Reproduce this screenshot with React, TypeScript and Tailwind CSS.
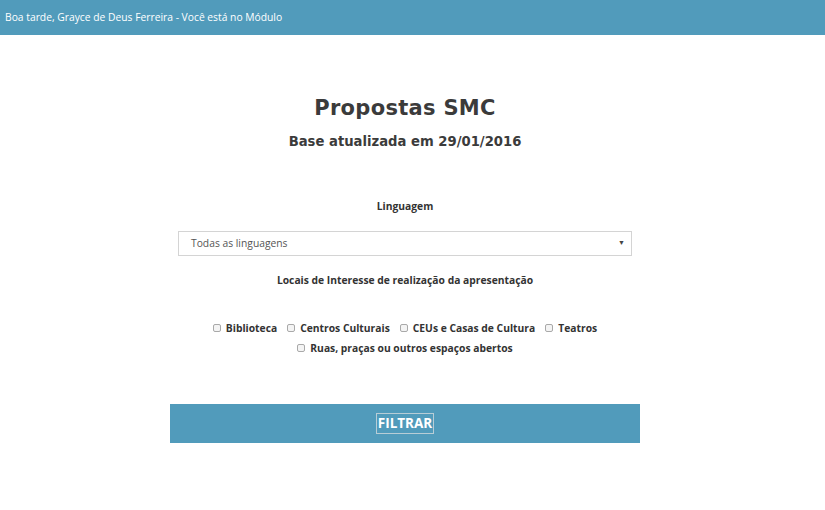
import React from 'react';

const locais = ['Biblioteca', 'Centros Culturais', 'CEUs e Casas de Cultura', 'Teatros'];

const Check = ({ label }: { label: string }) => (
  <label className="inline-flex items-center gap-[5px] mx-[5px]">
    <span className="w-[8px] h-[8px] rounded-[2px] border border-[#a9a9a9] bg-[#f4f4f4]" />
    <span>{label}</span>
  </label>
);

export default function App() {
  return (
    <div className="min-h-[510px] bg-white font-['Open_Sans',sans-serif] text-[#333]">
      <div className="h-[35px] bg-[#519bbb] px-[5px] flex items-center text-white text-[10.3px]">
        Boa tarde, Grayce de Deus Ferreira - Você está no Módulo
      </div>

      <div className="ml-[170px] w-[470px] text-center">
        <h1 className="mt-[58px] text-[21px] leading-[30px] font-bold text-[#3b3b3b] font-['DejaVu_Sans',sans-serif] tracking-[0.3px]">
          Propostas SMC
        </h1>
        <h2 className="mt-[9px] text-[13.2px] leading-[20px] font-bold text-[#3b3b3b] font-['DejaVu_Sans',sans-serif]">
          Base atualizada em 29/01/2016
        </h2>

        <p className="mt-[46px] text-[10.3px] font-bold leading-[16px]">Linguagem</p>

        <div className="mx-[8px] mt-[17px] h-[25px] border border-[#d4d4d4] flex items-center justify-between pl-[12px] pr-[6px] text-[10.3px] text-[#555]">
          <span>Todas as linguagens</span>
          <span className="text-[7px] text-[#444]">▼</span>
        </div>

        <p className="mt-[16px] text-[10.3px] font-bold leading-[16px]">Locais de Interesse de realização da apresentação</p>

        <div className="mt-[30px] text-[10.3px] font-bold leading-[20px]">
          <div className="flex justify-center">
            {locais.map((l) => (
              <Check key={l} label={l} />
            ))}
          </div>
          <div className="flex justify-center">
            <Check label="Ruas, praças ou outros espaços abertos" />
          </div>
        </div>

        <button className="mt-[46px] w-full h-[39px] bg-[#519bbb] flex items-center justify-center">
          <span className="px-[1px] border border-[#b8cdd6] text-white text-[13.5px] font-bold leading-[19px]">FILTRAR</span>
        </button>
      </div>
    </div>
  );
}
